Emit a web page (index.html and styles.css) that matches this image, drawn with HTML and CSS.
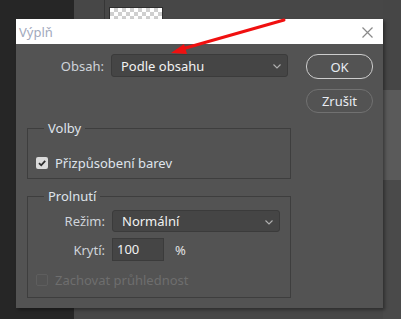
FILE: index.html
```html
<!DOCTYPE html>
<html lang="cs">
<head>
<meta charset="utf-8">
<title>Výplň</title>
<link rel="stylesheet" href="styles.css">
</head>
<body>
<div class="desk">
  <div class="desk-left"></div>
  <div class="desk-main">
    <div class="desk-top">
      <div class="desk-sep"></div>
      <div class="checker"></div>
    </div>
  </div>
  <div class="desk-right">
    <div class="dr-a"></div>
    <div class="dr-b"></div>
    <div class="dr-c"></div>
  </div>
</div>

<div class="dialog">
  <div class="titlebar">
    <span class="title">Výplň</span>
    <svg class="close" width="11" height="11" viewBox="0 0 11 11"><path d="M0.5 0.5L10.5 10.5M10.5 0.5L0.5 10.5" stroke="#8a8a8a" stroke-width="1.2" fill="none"/></svg>
  </div>
  <div class="body">
    <div class="main">
      <div class="row">
        <span class="label">Obsah:</span>
        <div class="select wide"><span>Podle obsahu</span><svg class="chev" width="8" height="5" viewBox="0 0 8 5"><path d="M0.5 0.5L4 4L7.5 0.5" stroke="#b0b0b0" stroke-width="1.1" fill="none"/></svg></div>
      </div>
      <fieldset class="group volby">
        <legend>Volby</legend>
        <div class="check-row">
          <span class="cb on"><svg width="10" height="10" viewBox="0 0 10 10"><path d="M2 5.2L4.2 7.3L8.2 2.8" stroke="#2c2c2c" stroke-width="1.8" fill="none"/></svg></span>
          <span class="cb-label">Přizpůsobení barev</span>
        </div>
      </fieldset>
      <fieldset class="group prol">
        <legend>Prolnutí</legend>
        <div class="row r2">
          <span class="label">Režim:</span>
          <div class="select mid"><span>Normální</span><svg class="chev" width="8" height="5" viewBox="0 0 8 5"><path d="M0.5 0.5L4 4L7.5 0.5" stroke="#b0b0b0" stroke-width="1.1" fill="none"/></svg></div>
        </div>
        <div class="row r3">
          <span class="label">Krytí:</span>
          <div class="input">100</div>
          <span class="pct">%</span>
        </div>
        <div class="check-row dis">
          <span class="cb off"></span>
          <span class="cb-label">Zachovat průhlednost</span>
        </div>
      </fieldset>
    </div>
    <div class="buttons">
      <div class="btn primary">OK</div>
      <div class="btn">Zrušit</div>
    </div>
  </div>
</div>

<svg class="arrow" width="401" height="319" viewBox="0 0 401 319">
  <line x1="284" y1="20" x2="182" y2="49" stroke="#f01010" stroke-width="3" stroke-linecap="round"/>
  <polygon points="171,53 184,44 187,54" fill="#f01010"/>
</svg>
</body>
</html>
```
FILE: styles.css
```css
* { box-sizing: border-box; }
html, body { margin: 0; padding: 0; }
body {
  width: 401px;
  height: 319px;
  overflow: hidden;
  position: relative;
  font-family: "Noto Sans", "DejaVu Sans", sans-serif;
  font-size: 13px;
  background: #262626;
}
.desk { display: flex; width: 401px; height: 319px; }
.desk-left { width: 74px; background: #262626; }
.desk-main { flex: 1; background: #474747; }
.desk-top { display: flex; height: 40px; }
.desk-sep { width: 1px; height: 40px; margin-left: 30px; background: #363636; }
.checker {
  margin-left: 4px;
  margin-top: 7px;
  width: 54px;
  height: 40px;
  border: 1px solid #2e2e2e;
  background-color: #fff;
  background-image:
    linear-gradient(45deg, #cfcfcf 25%, transparent 25%, transparent 75%, #cfcfcf 75%),
    linear-gradient(45deg, #cfcfcf 25%, transparent 25%, transparent 75%, #cfcfcf 75%);
  background-size: 8px 8px;
  background-position: 0 0, 4px 4px;
}
.desk-right { width: 18px; display: flex; flex-direction: column; }
.dr-a { height: 90px; background: #464646; }
.dr-b { height: 90px; background: #5a5a5a; }
.dr-c { flex: 1; background: #4a4a4a; }

.dialog {
  position: absolute;
  left: 16px;
  top: 19px;
  width: 367px;
  height: 289px;
  background: #535353;
  box-shadow: 2px 2px 3px rgba(0,0,0,0.35);
}
.titlebar {
  height: 25px;
  background: #fff;
  display: flex;
  align-items: center;
  justify-content: space-between;
  padding: 0 10px 0 3px;
}
.title { color: #a2a9bd; font-size: 13px; }
.close { margin-top: 1px; }

.body { display: flex; padding-top: 10px; }
.main { width: 276px; }
.row { display: flex; align-items: center; }
.label {
  width: 89px;
  text-align: right;
  color: #cfd3da;
  padding-right: 1px;
}
.select {
  margin-left: 6px;
  height: 23px;
  background: #454545;
  border: 1px solid #3b3b3b;
  border-radius: 3px;
  display: flex;
  align-items: center;
  justify-content: space-between;
  padding: 0 6px 0 9px;
  color: #f2f2f2;
}
.select.wide { width: 177px; }
.select.mid { width: 168px; height: 22px; }
.chev { margin-top: 2px; }

.group {
  margin: 0 0 0 11px;
  width: 264px;
  border: 1px solid #3e3e3e;
  padding: 0;
}
.group legend {
  margin-left: 16px;
  padding: 0 4px;
  color: #dfe4ec;
  line-height: 16px;
}
.volby { margin-top: 43px; height: 59px; }
.volby .check-row { margin-top: 18px; }
.prol { margin-top: 9px; height: 110px; }
.check-row { display: flex; align-items: center; padding-left: 8px; }
.cb {
  width: 12px;
  height: 12px;
  border-radius: 2px;
  display: flex;
  align-items: center;
  justify-content: center;
}
.cb.on { background: #dadada; }
.cb.off { border: 1px solid #5e5e5e; }
.cb-label { margin-left: 7px; color: #dfe4ec; }
.dis .cb-label { color: #6e6e6e; }
.dis { margin-top: 10px; }

.prol .row .label { width: 78px; }
.r2 { margin-top: 6px; }
.r3 { margin-top: 6px; }
.input {
  margin-left: 6px;
  width: 52px;
  height: 23px;
  background: #454545;
  border: 1px solid #3b3b3b;
  color: #f2f2f2;
  padding-left: 4px;
  line-height: 21px;
}
.pct { margin-left: 11px; color: #e2e2e2; }

.buttons { margin-left: 14px; display: flex; flex-direction: column; }
.btn {
  width: 67px;
  height: 24px;
  border: 1.5px solid #717171;
  border-radius: 12px;
  color: #e8ecf2;
  display: flex;
  align-items: center;
  justify-content: center;
  margin-bottom: 10px;
}
.btn.primary { height: 25px; border-color: #cdcdcd; }

.arrow { position: absolute; left: 0; top: 0; pointer-events: none; }
```
